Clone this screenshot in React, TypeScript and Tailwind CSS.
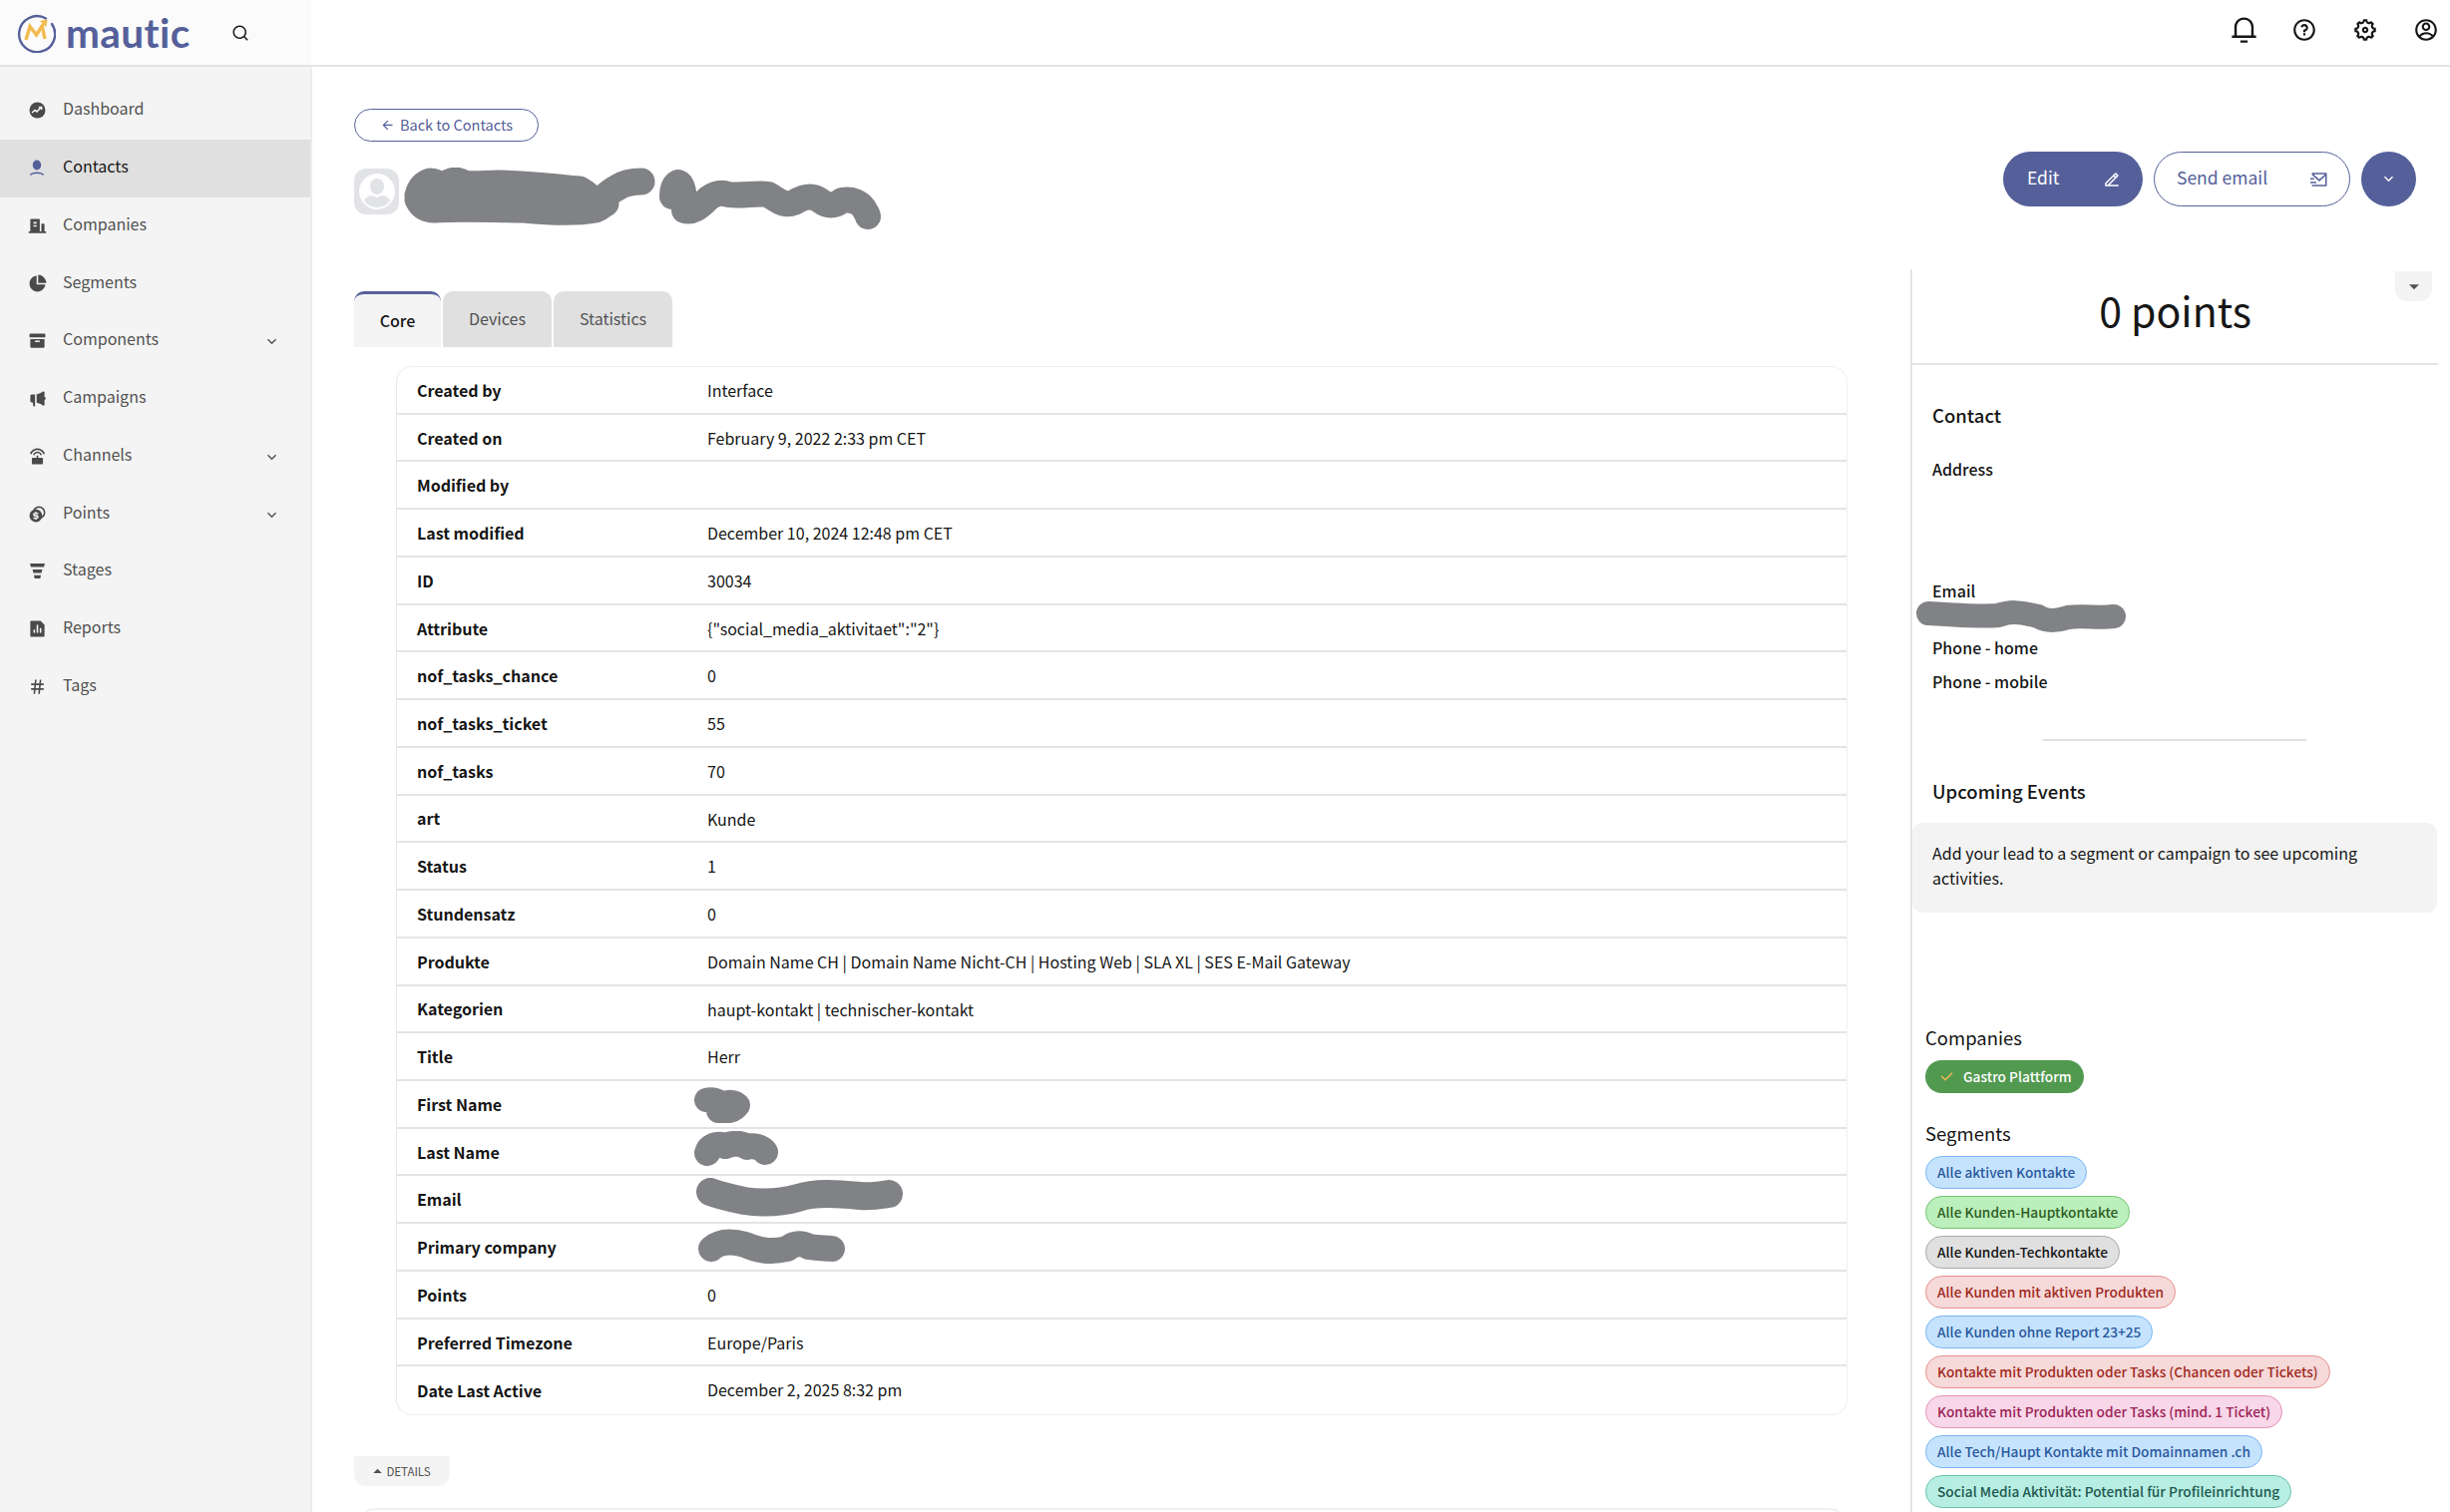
import type { ReactNode } from "react";
import {
  RiAccountCircleLine,
  RiArchiveFill,
  RiArrowDownSFill,
  RiArrowDownSLine,
  RiArrowLeftLine,
  RiArrowUpSFill,
  RiBuildingFill,
  RiCheckLine,
  RiCoinsFill,
  RiEdit2Line,
  RiFileChartFill,
  RiHashtag,
  RiMailSendLine,
  RiMegaphoneFill,
  RiNotification3Line,
  RiPieChart2Fill,
  RiQuestionLine,
  RiRouterFill,
  RiSearchLine,
  RiSettings5Line,
} from "react-icons/ri";

const FONT = "[font-family:'Noto_Sans_CJK_SC','Open_Sans',sans-serif]";

function Blot({ w, h, d, sw = 26, className = "" }: { w: number; h: number; d: string; sw?: number; className?: string }) {
  return (
    <svg width={w} height={h} viewBox={`0 0 ${w} ${h}`} className={className} fill="none">
      <path d={d} stroke="#818285" strokeWidth={sw} strokeLinecap="round" strokeLinejoin="round" />
    </svg>
  );
}

function DashIcon() {
  return (
    <svg width="17" height="17" viewBox="0 0 17 17">
      <circle cx="8.5" cy="8.5" r="8" fill="#4a4a4a" />
      <path d="M3 11l3-2.5 2 1.5 4-4.5M10 5.5h2.6v2.6" stroke="#f4f4f4" strokeWidth="1.6" fill="none" />
    </svg>
  );
}

function UserIcon() {
  return (
    <svg width="16" height="17" viewBox="0 0 16 17">
      <ellipse cx="8" cy="5.5" rx="4.2" ry="5" fill="#55609a" />
      <path d="M1.5 15.5c2-3 11-3 13 0" stroke="#55609a" strokeWidth="1.4" fill="none" />
    </svg>
  );
}

function StagesIcon() {
  return (
    <svg width="15" height="16" viewBox="0 0 15 16" fill="#4a4a4a">
      <path d="M0 0h15l-1 3.6H1z" />
      <path d="M2.5 6h10l-1 3.4h-8z" />
      <path d="M4 11.8h7l-.7 3.2H4.700z" />
    </svg>
  );
}

const nav: { label: string; icon: ReactNode; chevron?: boolean; active?: boolean }[] = [
  { label: "Dashboard", icon: <DashIcon /> },
  { label: "Contacts", icon: <UserIcon />, active: true },
  { label: "Companies", icon: <RiBuildingFill size={19} /> },
  { label: "Segments", icon: <RiPieChart2Fill size={19} /> },
  { label: "Components", icon: <RiArchiveFill size={19} />, chevron: true },
  { label: "Campaigns", icon: <RiMegaphoneFill size={19} /> },
  { label: "Channels", icon: <RiRouterFill size={19} />, chevron: true },
  { label: "Points", icon: <RiCoinsFill size={19} />, chevron: true },
  { label: "Stages", icon: <StagesIcon /> },
  { label: "Reports", icon: <RiFileChartFill size={19} /> },
  { label: "Tags", icon: <RiHashtag size={19} /> },
];

const rows: { label: string; value?: string; blot?: ReactNode }[] = [
  { label: "Created by", value: "Interface" },
  { label: "Created on", value: "February 9, 2022 2:33 pm CET" },
  { label: "Modified by" },
  { label: "Last modified", value: "December 10, 2024 12:48 pm CET" },
  { label: "ID", value: "30034" },
  { label: "Attribute", value: '{"social_media_aktivitaet":"2"}' },
  { label: "nof_tasks_chance", value: "0" },
  { label: "nof_tasks_ticket", value: "55" },
  { label: "nof_tasks", value: "70" },
  { label: "art", value: "Kunde" },
  { label: "Status", value: "1" },
  { label: "Stundensatz", value: "0" },
  { label: "Produkte", value: "Domain Name CH | Domain Name Nicht-CH | Hosting Web | SLA XL | SES E-Mail Gateway" },
  { label: "Kategorien", value: "haupt-kontakt | technischer-kontakt" },
  { label: "Title", value: "Herr" },
  {
    label: "First Name",
    blot: <Blot w={56} h={36} sw={24} d="M12 13c6-2 12 0 16 4 6-3 12-3 16 1-4 6-10 7-20 6" className="absolute left-[-13px] top-[6px]" />,
  },
  {
    label: "Last Name",
    blot: <Blot w={84} h={36} sw={26} d="M13 22c2-7 10-10 18-7 8-3 16-3 22 1 6-2 14 0 18 5" className="absolute left-[-13px] top-[2px]" />,
  },
  {
    label: "Email",
    blot: <Blot w={210} h={40} sw={28} d="M14 14c10 4 20 6 34 9 20 3 40 1 54-3 18-6 40-4 62-2 12 1 22-1 29-2" className="absolute left-[-11px] top-[2px]" />,
  },
  {
    label: "Primary company",
    blot: <Blot w={150} h={38} sw={26} d="M13 21c8-7 20-8 34-4 14 6 26 8 42 4 8-6 14-6 22-2 10 2 16 1 23 2" className="absolute left-[-9px] top-[4px]" />,
  },
  { label: "Points", value: "0" },
  { label: "Preferred Timezone", value: "Europe/Paris" },
  { label: "Date Last Active", value: "December 2, 2025 8:32 pm" },
];

const segments = [
  { label: "Alle aktiven Kontakte", cls: "bg-[#c6e3fd] border-[#79b6f5] text-[#2a5a9e]" },
  { label: "Alle Kunden-Hauptkontakte", cls: "bg-[#bbefbb] border-[#74c274] text-[#2f5e24]" },
  { label: "Alle Kunden-Techkontakte", cls: "bg-[#e0e0e0] border-[#a8a8a8] text-[#161616]" },
  { label: "Alle Kunden mit aktiven Produkten", cls: "bg-[#f6d9d9] border-[#e79090] text-[#a02a22]" },
  { label: "Alle Kunden ohne Report 23+25", cls: "bg-[#c6e3fd] border-[#79b6f5] text-[#2a5a9e]" },
  { label: "Kontakte mit Produkten oder Tasks (Chancen oder Tickets)", cls: "bg-[#f6d9d9] border-[#e79090] text-[#a02a22]" },
  { label: "Kontakte mit Produkten oder Tasks (mind. 1 Ticket)", cls: "bg-[#f7d7e8] border-[#e78fba] text-[#9c2458]" },
  { label: "Alle Tech/Haupt Kontakte mit Domainnamen .ch", cls: "bg-[#c6e3fd] border-[#79b6f5] text-[#2a5a9e]" },
  { label: "Social Media Aktivität: Potential für Profileinrichtung", cls: "bg-[#b6eee3] border-[#6cc2ae] text-[#22594f]" },
];

function Logo() {
  return (
    <div className="flex items-center">
      <svg width="40" height="40" viewBox="0 0 40 40" fill="none">
        <path d="M30 5.500A18 18 0 1 0 36 11" stroke="#55609a" strokeWidth="2.400" strokeLinecap="round" />
        <path d="M10 27l4-13.500 6.500 8.500 7-11" stroke="#f3bb4f" strokeWidth="3.400" fill="none" />
        <path d="M24 8l7.500-1.500-1 7.500z" fill="#f3bb4f" />
        <path d="M26.500 14l2.500 12" stroke="#f3bb4f" strokeWidth="3.400" />
      </svg>
      <span className="ml-[10px] text-[40.500px] leading-[40px] font-bold tracking-[0.4px] text-[#55609a] [font-family:Lato,sans-serif]">mautic</span>
    </div>
  );
}

export default function App() {
  return (
    <div className={`flex h-[1516px] w-[2456px] flex-col overflow-hidden bg-white text-[16px] text-[#161616] ${FONT}`}>
      <header className="flex h-[67px] shrink-0 border-b-2 border-[#e4e4e4]">
        <div className="flex w-[312px] items-center bg-[#fbfbfb] pl-[16px]">
          <Logo />
          <RiSearchLine size={18} className="ml-[41px] text-[#161616]" />
        </div>
        <div className="flex flex-1 items-center justify-end gap-[35px] pr-[11px] pb-[6px] text-[#161616]">
          <RiNotification3Line size={29} className="-mr-[2px]" />
          <RiQuestionLine size={26} />
          <RiSettings5Line size={26} />
          <RiAccountCircleLine size={26} />
        </div>
      </header>

      <div className="flex min-h-0 flex-1">
        <aside className="w-[313px] shrink-0 border-r-2 border-[#ececec] bg-[#f4f4f4] pt-[15px]">
          {nav.map((n) => (
            <div
              key={n.label}
              className={`flex h-[57.750px] items-center pr-[30px] ${n.active ? "bg-[#e0e0e0] text-[#161616]" : "text-[#525252]"}`}
            >
              <span className="flex w-[75px] shrink-0 justify-center pr-[1px] pl-0 text-[#4a4a4a]">{n.icon}</span>
              <span className="-mt-[5px] -ml-[12px] leading-[20px]">{n.label}</span>
              {n.chevron && <RiArrowDownSLine size={17} className="mt-[2px] ml-auto text-[#525252]" />}
            </div>
          ))}
        </aside>

        <main className="flex min-w-0 flex-1">
          <section className="w-[1602px] shrink-0 pt-[42px] pl-[42px]">
            <button className="flex h-[33px] w-[185px] items-center justify-center gap-[5px] rounded-full border border-[#55609a] pb-[2px] text-[14.500px] text-[#55609a]">
              <RiArrowLeftLine size={15} className="mt-[2px]" />
              Back to Contacts
            </button>

            <div className="mt-[20px] flex h-[70px] items-start">
              <div className="mt-[7px] flex h-[46px] w-[45px] items-center justify-center rounded-[12px] bg-[#e2e3e6]">
                <svg width="38" height="38" viewBox="0 0 38 38" fill="none">
                  <circle cx="19" cy="19" r="17.500" fill="#fff" stroke="#fff" />
                  <ellipse cx="19" cy="14" rx="7" ry="8" fill="#e2e3e6" />
                  <path d="M6 28c2-5 8-6 13-3 5-3 11-2 13 3-3 5-8 7-13 7s-10-2-13-7z" fill="#e2e3e6" />
                </svg>
              </div>
              <Blot
                w={262}
                h={62}
                sw={27}
                d="M15 28c2-8 6-12 12-14 6 0 10 4 14 4 8-6 14-6 20-2 12 2 20 0 34 0 30 0 56 4 82 6 8 4 12 10 18 14 6-6 12-12 20-16 6-4 16-6 24-6M15 32c4 8 10 10 16 10 30-2 60 0 90 0 20 2 50 4 72 0 6-2 8-6 10-6M60 28l120 4"
                className="mt-[6px] ml-[4px]"
              />
              <Blot
                w={236}
                h={66}
                sw={26}
                d="M16 28c0-8 2-12 6-14 6 2 6 18 6 28 8 2 14-2 24-12 8-6 14-6 20-4 14 2 28-2 40 0 10 6 16 12 26 8 10-6 18-8 26-2 8 6 14 6 22 0 10-2 18 2 22 8 2 4 4 6 4 8"
                className="mt-[7px] ml-[-8px]"
              />
            </div>

            <div className="mt-[60px] flex h-[56px] items-stretch gap-[2px]">
              <div className="flex w-[87px] items-center justify-center rounded-t-[10px] border-t-[3px] border-[#55609a] bg-[#f4f4f4] pb-[2px] font-medium">Core</div>
              <div className="flex w-[109px] items-center justify-center rounded-t-[10px] bg-[#e0e0e0] pb-[2px] text-[#525252]">Devices</div>
              <div className="flex w-[119px] items-center justify-center rounded-t-[10px] bg-[#e0e0e0] pb-[2px] text-[#525252]">Statistics</div>
            </div>

            <div className="mt-[19px] ml-[42px] w-[1455px] overflow-hidden rounded-[16px] border border-[#f0f0f0] border-r-[#f0f0f0] border-l-[#e8e8e8]">
              {rows.map((r, i) => (
                <div
                  key={r.label}
                  className={`flex h-[47.740px] items-center pl-[20px] ${i === rows.length - 1 ? "" : "border-b-2 border-[#e4e4e4]"}`}
                >
                  <div className="w-[291px] shrink-0 font-bold leading-[20px]">{r.label}</div>
                  <div className="relative h-full flex-1 leading-[46px]">
                    {r.value}
                    {r.blot}
                  </div>
                </div>
              ))}
            </div>

            <div className="mt-[41px] flex h-[30px] w-[96px] items-center justify-center rounded-b-[12px] bg-[#f4f4f4] pr-[4px] text-[11.500px] text-[#525252]">
              <RiArrowUpSFill size={17} />
              DETAILS
            </div>
            <div className="mt-[22px] ml-[5px] h-[20px] w-[1490px] rounded-t-[16px] border-t-2 border-[#f0f0f0]" />
          </section>

          <section className="relative mt-[203px] min-w-0 flex-1 border-l-2 border-[#e4e4e4]">
            <div className="absolute top-[2px] right-[18px] flex h-[30px] w-[37px] items-center justify-center rounded-b-[12px] bg-[#f4f4f4] text-[#525252]">
              <RiArrowDownSFill size={20} />
            </div>
            <div className="flex h-[96px] w-[527px] items-center justify-center border-b-2 border-[#e4e4e4] pb-[15px] text-[41px] leading-[56px]">0 points</div>

            <div className="pl-[20px]">
              <h3 className="mt-[37px] text-[18.500px] leading-[26px] font-medium">Contact</h3>
              <div className="mt-[31px] leading-[20px] font-medium">Address</div>
              <div className="mt-[102px] leading-[20px] font-medium">Email</div>
              <Blot
                w={216}
                h={36}
                sw={24}
                d="M13 15c30 2 60 3 70 2 12-4 20-4 40 1 10 6 20 4 30 1 14-2 32 1 46-1"
                className="-ml-[17px] -mt-[2px]"
              />
              <div className="mt-[3px] leading-[20px] font-medium">Phone - home</div>
              <div className="mt-[14px] leading-[20px] font-medium">Phone - mobile</div>
              <div className="mt-[48px] ml-[111px] h-[2px] w-[264px] bg-[#e0e0e0]" />
              <h3 className="mt-[37px] text-[18.500px] leading-[26px] font-medium">Upcoming Events</h3>
            </div>
            <div className="mt-[19px] w-[526px] rounded-[10px] bg-[#f3f3f3] px-[20px] pt-[18px] pb-[22px] leading-[25px]">
              Add your lead to a segment or campaign to see upcoming activities.
            </div>

            <div className="mt-[112px] pl-[13px]">
              <div className="text-[18.500px] leading-[26px]">Companies</div>
              <div className="mt-[10px] flex h-[33px] w-fit items-center rounded-full bg-[#529950] pr-[12px] pl-[13px] text-[13.700px] font-medium text-white">
                <RiCheckLine size={17} className="mr-[8px] text-[#f3bb4f]" />
                Gastro Plattform
              </div>
              <div className="mt-[27px] text-[18.500px] leading-[26px]">Segments</div>
              <div className="mt-[10px] flex flex-col items-start gap-[7px]">
                {segments.map((s) => (
                  <div key={s.label} className={`flex h-[33px] items-center rounded-full border px-[11px] text-[13.700px] font-medium whitespace-nowrap ${s.cls}`}>
                    {s.label}
                  </div>
                ))}
              </div>
            </div>
          </section>

          <div className="absolute top-[152px] left-[2008px] flex gap-[11px] text-[17.500px]">
            <button className="flex h-[55px] w-[140px] items-center justify-between rounded-full bg-[#55609a] pr-[22px] pb-[2px] pl-[24px] text-white">
              Edit
              <RiEdit2Line size={18} className="mt-[2px]" />
            </button>
            <button className="flex h-[55px] w-[197px] items-center justify-between rounded-full border border-[#55609a] pr-[21px] pb-[2px] pl-[22px] text-[#55609a]">
              Send email
              <RiMailSendLine size={18} className="mt-[2px]" />
            </button>
            <button className="flex h-[55px] w-[55px] items-center justify-center rounded-full bg-[#55609a] text-white">
              <RiArrowDownSLine size={17} />
            </button>
          </div>
        </main>
      </div>
    </div>
  );
}
